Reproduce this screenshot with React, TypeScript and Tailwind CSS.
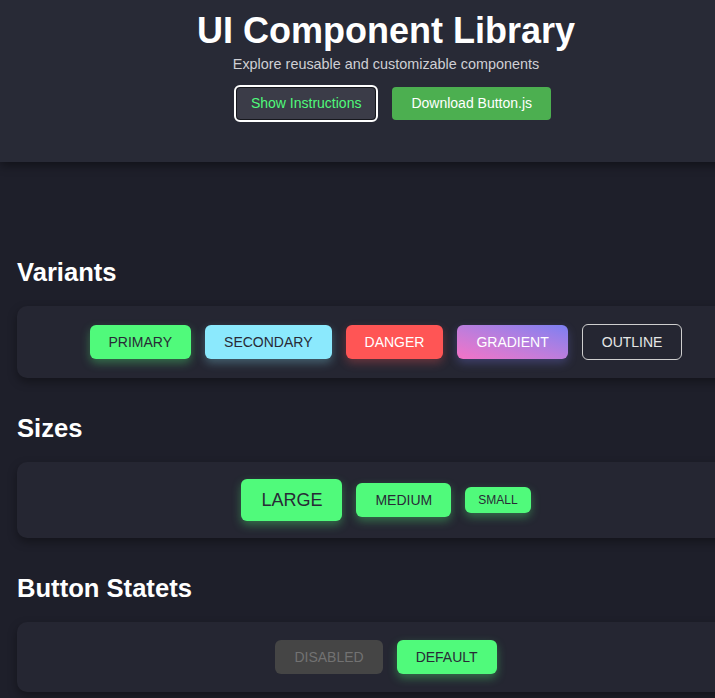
import React from 'react';

const Section: React.FC<{ title: string; height: string; children: React.ReactNode }> = ({ title, height, children }) => (
  <section>
    <h2 className="text-[25.6px] font-bold leading-[29px] text-white px-[17px] mb-[19px]">{title}</h2>
    <div className={`mx-[17px] ${height} bg-[#252632] rounded-[10px] shadow-[0_4px_10px_rgba(0,0,0,0.35)] flex items-center justify-center gap-[14px]`}>
      {children}
    </div>
  </section>
);

const App: React.FC = () => {
  return (
    <div className="w-[715px] h-[698px] overflow-hidden bg-[#1e1f2a] font-[family-name:Liberation_Sans,Arial,sans-serif]">
      <div className="w-[772px]">
        <header className="h-[162px] bg-[#282a36] pt-[10px] shadow-[0_3px_10px_rgba(0,0,0,0.45)] relative z-10 flex flex-col items-center">
          <h1 className="text-[36px] font-bold leading-[41px] text-white">UI Component Library</h1>
          <p className="mt-[5px] text-[14.4px] leading-[16px] text-[#cfcfd4]">Explore reusable and customizable components</p>
          <div className="mt-[15px] flex items-center gap-[16px] pl-[15px]">
            <button className="h-[33px] px-[14px] text-[14px] text-[#50fa7b] bg-[#3b3c48] border border-[#16171d] rounded-[4px] outline-2 outline-white">
              Show Instructions
            </button>
            <button className="h-[33px] px-[19px] text-[14px] text-white bg-[#4caf50] rounded-[4px]">
              Download Button.js
            </button>
          </div>
        </header>

        <main className="pt-[96px] flex flex-col gap-[36px]">
          <Section title="Variants" height="h-[72px]">
            <button className="h-[34px] px-[19px] rounded-[6px] text-[14px] text-[#282a36] bg-[#50fa7b] shadow-[0_4px_10px_rgba(80,250,123,0.35)]">PRIMARY</button>
            <button className="h-[34px] px-[19px] rounded-[6px] text-[14px] text-[#282a36] bg-[#8be9fd] shadow-[0_4px_10px_rgba(139,233,253,0.3)]">SECONDARY</button>
            <button className="h-[34px] px-[19px] rounded-[6px] text-[14px] text-white bg-[#ff5555] shadow-[0_4px_10px_rgba(255,85,85,0.3)]">DANGER</button>
            <button className="h-[34px] px-[19px] rounded-[6px] text-[14px] text-white bg-linear-to-tr from-[#f472c6] to-[#7b7ff2] shadow-[0_4px_10px_rgba(123,127,242,0.3)]">GRADIENT</button>
            <button className="h-[36px] px-[19px] rounded-[6px] text-[14px] text-[#e6e6e6] border border-[#cfcfcf] bg-transparent">OUTLINE</button>
          </Section>

          <Section title="Sizes" height="h-[76px]">
            <button className="h-[42px] px-[20px] rounded-[6px] text-[18px] text-[#282a36] bg-[#50fa7b] shadow-[0_4px_10px_rgba(80,250,123,0.35)]">LARGE</button>
            <button className="h-[34px] px-[19px] rounded-[6px] text-[14px] text-[#282a36] bg-[#50fa7b] shadow-[0_4px_10px_rgba(80,250,123,0.35)]">MEDIUM</button>
            <button className="h-[26px] px-[13px] rounded-[6px] text-[12px] text-[#282a36] bg-[#50fa7b] shadow-[0_4px_10px_rgba(80,250,123,0.35)]">SMALL</button>
          </Section>

          <Section title="Button Statets" height="h-[70px]">
            <button disabled className="h-[34px] px-[19px] rounded-[6px] text-[14px] text-[#727272] bg-[#454545]">DISABLED</button>
            <button className="h-[34px] px-[19px] rounded-[6px] text-[14px] text-[#282a36] bg-[#50fa7b] shadow-[0_4px_10px_rgba(80,250,123,0.35)]">DEFAULT</button>
          </Section>
        </main>
      </div>
    </div>
  );
};

export default App;
